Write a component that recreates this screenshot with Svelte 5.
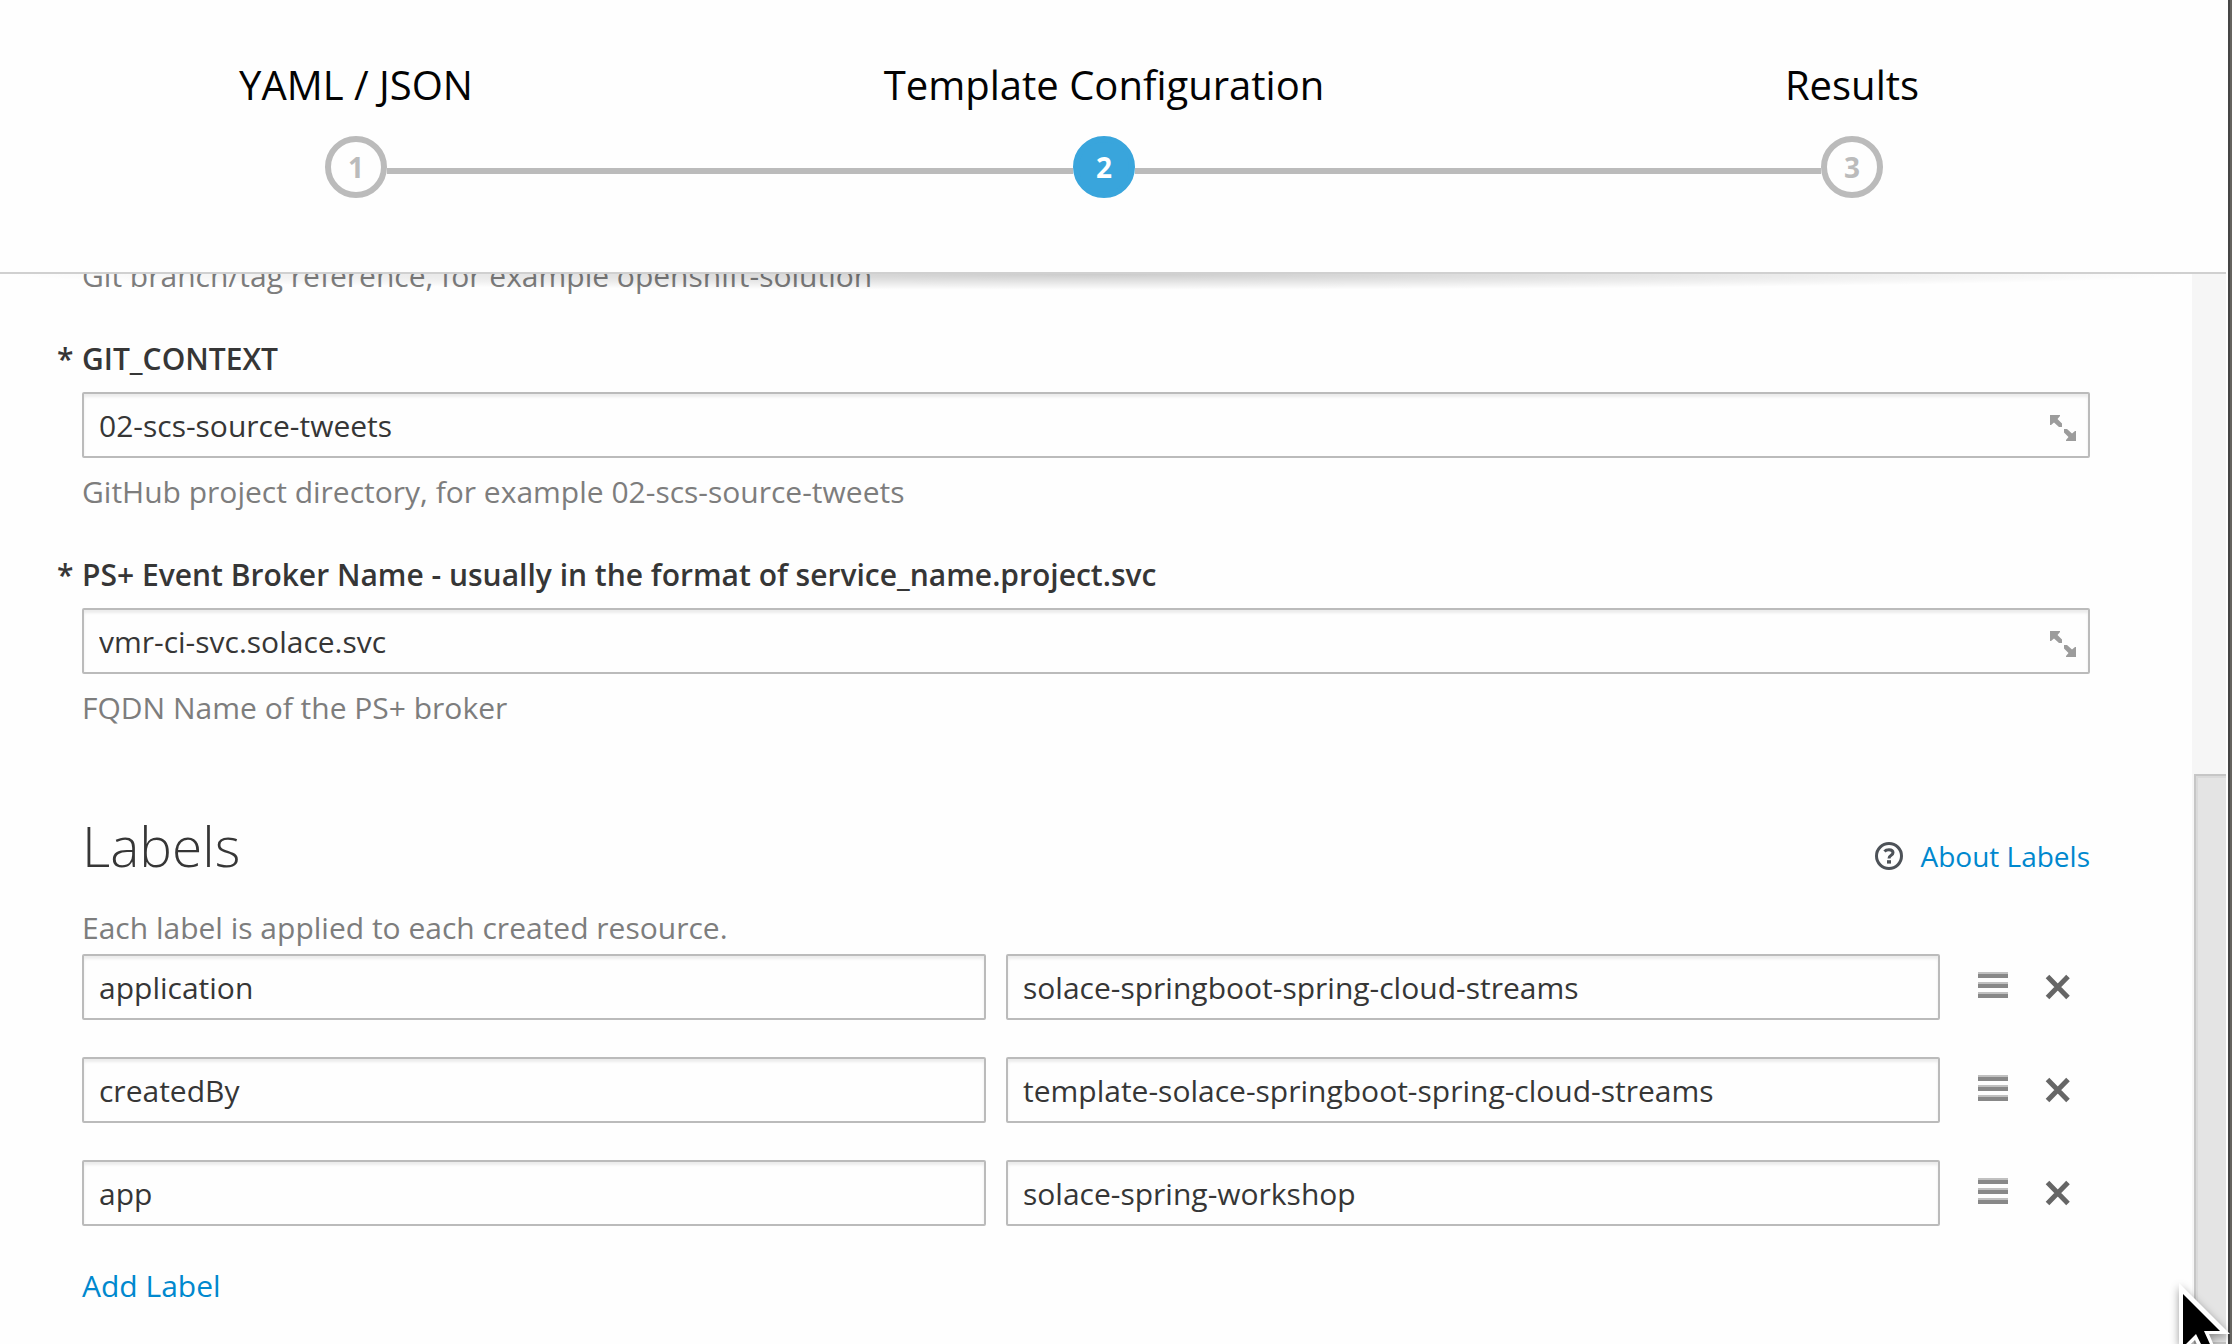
<script lang="ts">
  const steps = ['YAML / JSON', 'Template Configuration', 'Results'];
  const active = 1;

  let parameters = $state([
    {
      id: 'git-context',
      name: 'GIT_CONTEXT',
      value: '02-scs-source-tweets',
      help: 'GitHub project directory, for example 02-scs-source-tweets'
    },
    {
      id: 'broker-name',
      name: 'PS+ Event Broker Name - usually in the format of service_name.project.svc',
      value: 'vmr-ci-svc.solace.svc',
      help: 'FQDN Name of the PS+ broker'
    }
  ]);

  let labels = $state([
    { key: 'application', value: 'solace-springboot-spring-cloud-streams' },
    { key: 'createdBy', value: 'template-solace-springboot-spring-cloud-streams' },
    { key: 'app', value: 'solace-spring-workshop' }
  ]);

  const addLabel = () => labels.push({ key: '', value: '' });
  const removeLabel = (index: number) => labels.splice(index, 1);
</script>

<div class="window">
  <main class="dialog">
    <header>
      <ol class="steps">
        {#each steps as step, i}
          <li class="step" class:active={i === active} aria-current={i === active ? 'step' : undefined}>
            <span class="title">{step}</span>
            <span class="marker"><span class="number">{i + 1}</span></span>
          </li>
        {/each}
      </ol>
    </header>

    <div class="body">
      <form class="content">
        <p class="help">Git branch/tag reference, for example openshift-solution</p>

        {#each parameters as parameter}
          <div class="field">
            <label for={parameter.id}><span class="required">*</span>{parameter.name}</label>
            <div class="control">
              <input id={parameter.id} type="text" bind:value={parameter.value} />
              <button class="expand" type="button" aria-label="Expand">
                <svg viewBox="0 0 26 26" width="26" height="26">
                  <path d="M0 0H10V1L7.500 4L12 8.500V12H9L4 7.500L1 10H0ZM26 26H16V25L18.500 22L14 17.500V14H17L22 18.500L25 16H26Z" />
                </svg>
              </button>
            </div>
            <p class="help">{parameter.help}</p>
          </div>
        {/each}

        <section>
          <div class="heading">
            <h2>Labels</h2>
            <div class="about">
              <svg viewBox="0 0 28 28" width="28" height="28" aria-hidden="true">
                <circle cx="14" cy="14" r="12.500" />
                <path d="M9.500 9.500C10.500 8.300 12 7.800 14 7.800C16.500 7.800 18 9 18 10.800C18 13.600 14 13 14 16.500" />
                <path d="M14 18.200V21.600" stroke-width="4" />
              </svg>
              <a href="#labels">About Labels</a>
            </div>
          </div>
          <p class="help">Each label is applied to each created resource.</p>
          <div class="rows">
            {#each labels as label, i}
              <div class="row">
                <input type="text" aria-label="Label name" bind:value={label.key} />
                <input type="text" aria-label="Label value" bind:value={label.value} />
                <div class="actions">
                  <button type="button" class="drag" aria-label="Move row">
                    <svg viewBox="0 0 30 28" width="30" height="28">
                      <path class="edge" d="M0 0H30V2H0ZM0 10H30V12H0ZM0 20H30V22H0Z" />
                      <path d="M0 2H30V6H0ZM0 12H30V16H0ZM0 22H30V26H0Z" />
                    </svg>
                  </button>
                  <button type="button" class="remove" aria-label="Delete row" onclick={() => removeLabel(i)}>
                    <svg viewBox="0 0 26 28" width="26" height="28">
                      <path d="M2.500 4.500L23 25.500M23 4.500L2.500 25.500" />
                    </svg>
                  </button>
                </div>
              </div>
            {/each}
          </div>
          <button type="button" class="add" onclick={addLabel}>Add Label</button>
        </section>
      </form>
      <div class="track"><div class="thumb"></div></div>
      <div class="shade"></div>
    </div>
  </main>
  <svg class="pointer" viewBox="0 0 53 61" width="53" height="61" aria-hidden="true">
    <path class="rim" d="M0 0L51 51H30L39 72L25 78L16 57L0 72Z" />
    <path d="M4 11L41 48H25L35 70L28 73L17 51L4 64Z" />
  </svg>
</div>

<style>
  :global(body) {
    background: #fff;
  }
  * {
    box-sizing: border-box;
  }
  .window {
    position: relative;
    height: 100vh;
    overflow: hidden;
    border-right: 2px solid #666460;
    font-family: 'Open Sans', 'Liberation Sans', sans-serif;
    font-size: 30px;
    line-height: 40px;
    color: #363636;
  }
  .dialog {
    display: flex;
    flex-direction: column;
    height: 100%;
    padding-right: 2px;
    border-right: 2px solid #454545;
    background: #fefefe;
  }
  header {
    flex: none;
    padding: 57px 0 74px;
    border-bottom: 2px solid #d0d0d0;
  }
  .steps {
    display: grid;
    grid-template-columns: repeat(3, 1fr);
    margin: 0 0 0 -18px;
    padding: 0;
    list-style: none;
  }
  .step {
    display: flex;
    flex-direction: column;
    align-items: center;
    gap: 23px;
  }
  .title {
    font-size: 40px;
    line-height: 56px;
    color: #030303;
  }
  .marker {
    display: flex;
    align-items: center;
    align-self: stretch;
    color: #bbb;
  }
  .marker::before,
  .marker::after {
    content: '';
    flex: 1;
    height: 6px;
    margin-top: 8px;
    background: #bbb;
  }
  .step:first-child .marker::before,
  .step:last-child .marker::after {
    background: none;
  }
  .number {
    display: flex;
    align-items: center;
    justify-content: center;
    width: 62px;
    height: 62px;
    border: 6px solid #bbb;
    border-radius: 50%;
    font-size: 28px;
    font-weight: 700;
  }
  .active .number {
    border-color: #39a5dc;
    background: #39a5dc;
    color: #fff;
  }
  .body {
    position: relative;
    display: flex;
    flex: 1;
    min-height: 0;
    overflow: hidden;
  }
  .content {
    flex: 1;
    margin-top: -18px;
    padding: 0 102px 0 82px;
  }
  p {
    margin: 0;
  }
  .help {
    color: #7d7d7d;
  }
  .field {
    padding-top: 43px;
  }
  label {
    display: flex;
    margin-bottom: 13px;
    font-weight: 600;
  }
  .required {
    width: 25px;
    margin-left: -25px;
  }
  input {
    display: block;
    width: 100%;
    height: 66px;
    padding: 0 15px;
    border: 2px solid #bbb;
    border-radius: 2px;
    background: #fefefe;
    box-shadow: inset 0 3px 3px rgba(3, 3, 3, 0.075);
    font: inherit;
    color: inherit;
  }
  .control {
    position: relative;
    margin-bottom: 14px;
  }
  button {
    padding: 0;
    border: 0;
    background: none;
    font: inherit;
    cursor: pointer;
  }
  svg {
    display: block;
  }
  .expand {
    position: absolute;
    top: 23px;
    right: 14px;
    fill: #9c9c9c;
  }
  section {
    padding-top: 81px;
  }
  .heading {
    display: flex;
    align-items: flex-end;
    justify-content: space-between;
    margin-bottom: 25px;
  }
  h2 {
    margin: 0;
    font-size: 55px;
    font-weight: 300;
    line-height: 74px;
  }
  .about {
    display: flex;
    align-items: center;
    gap: 17px;
    padding-bottom: 7px;
    font-size: 28px;
  }
  .about svg {
    fill: none;
    stroke: #4d5258;
    stroke-width: 3;
  }
  a,
  .add {
    color: #0088ce;
    text-decoration: none;
  }
  .rows {
    display: grid;
    gap: 37px;
    margin: 6px 0 40px;
  }
  .row {
    display: grid;
    grid-template-columns: 904fr 934fr 130px;
    column-gap: 20px;
    align-items: center;
  }
  .actions {
    display: flex;
    gap: 37px;
    padding: 0 0 2px 18px;
  }
  .drag {
    fill: #888;
  }
  .edge {
    fill: #c0c0c0;
  }
  .remove {
    stroke: #666;
    stroke-width: 5;
  }
  .track {
    flex: none;
    width: 34px;
    padding: 500px 0 0 2px;
    background: #f6f6f6;
  }
  .thumb {
    height: 100%;
    border: 2px solid #c6c6c6;
    border-right: 0;
    background: #e4e4e4;
    box-shadow: inset 2px 2px #dadada;
  }
  .shade {
    position: absolute;
    top: 0;
    left: 0;
    right: 34px;
    height: 16px;
    background: radial-gradient(50% 100% at 50% 0, rgba(0, 0, 0, 0.2), rgba(0, 0, 0, 0));
  }
  .pointer {
    position: absolute;
    right: -2px;
    bottom: 0;
    filter: drop-shadow(0 3px 4px rgba(0, 0, 0, 0.4));
  }
  .rim {
    fill: #fff;
  }
</style>
